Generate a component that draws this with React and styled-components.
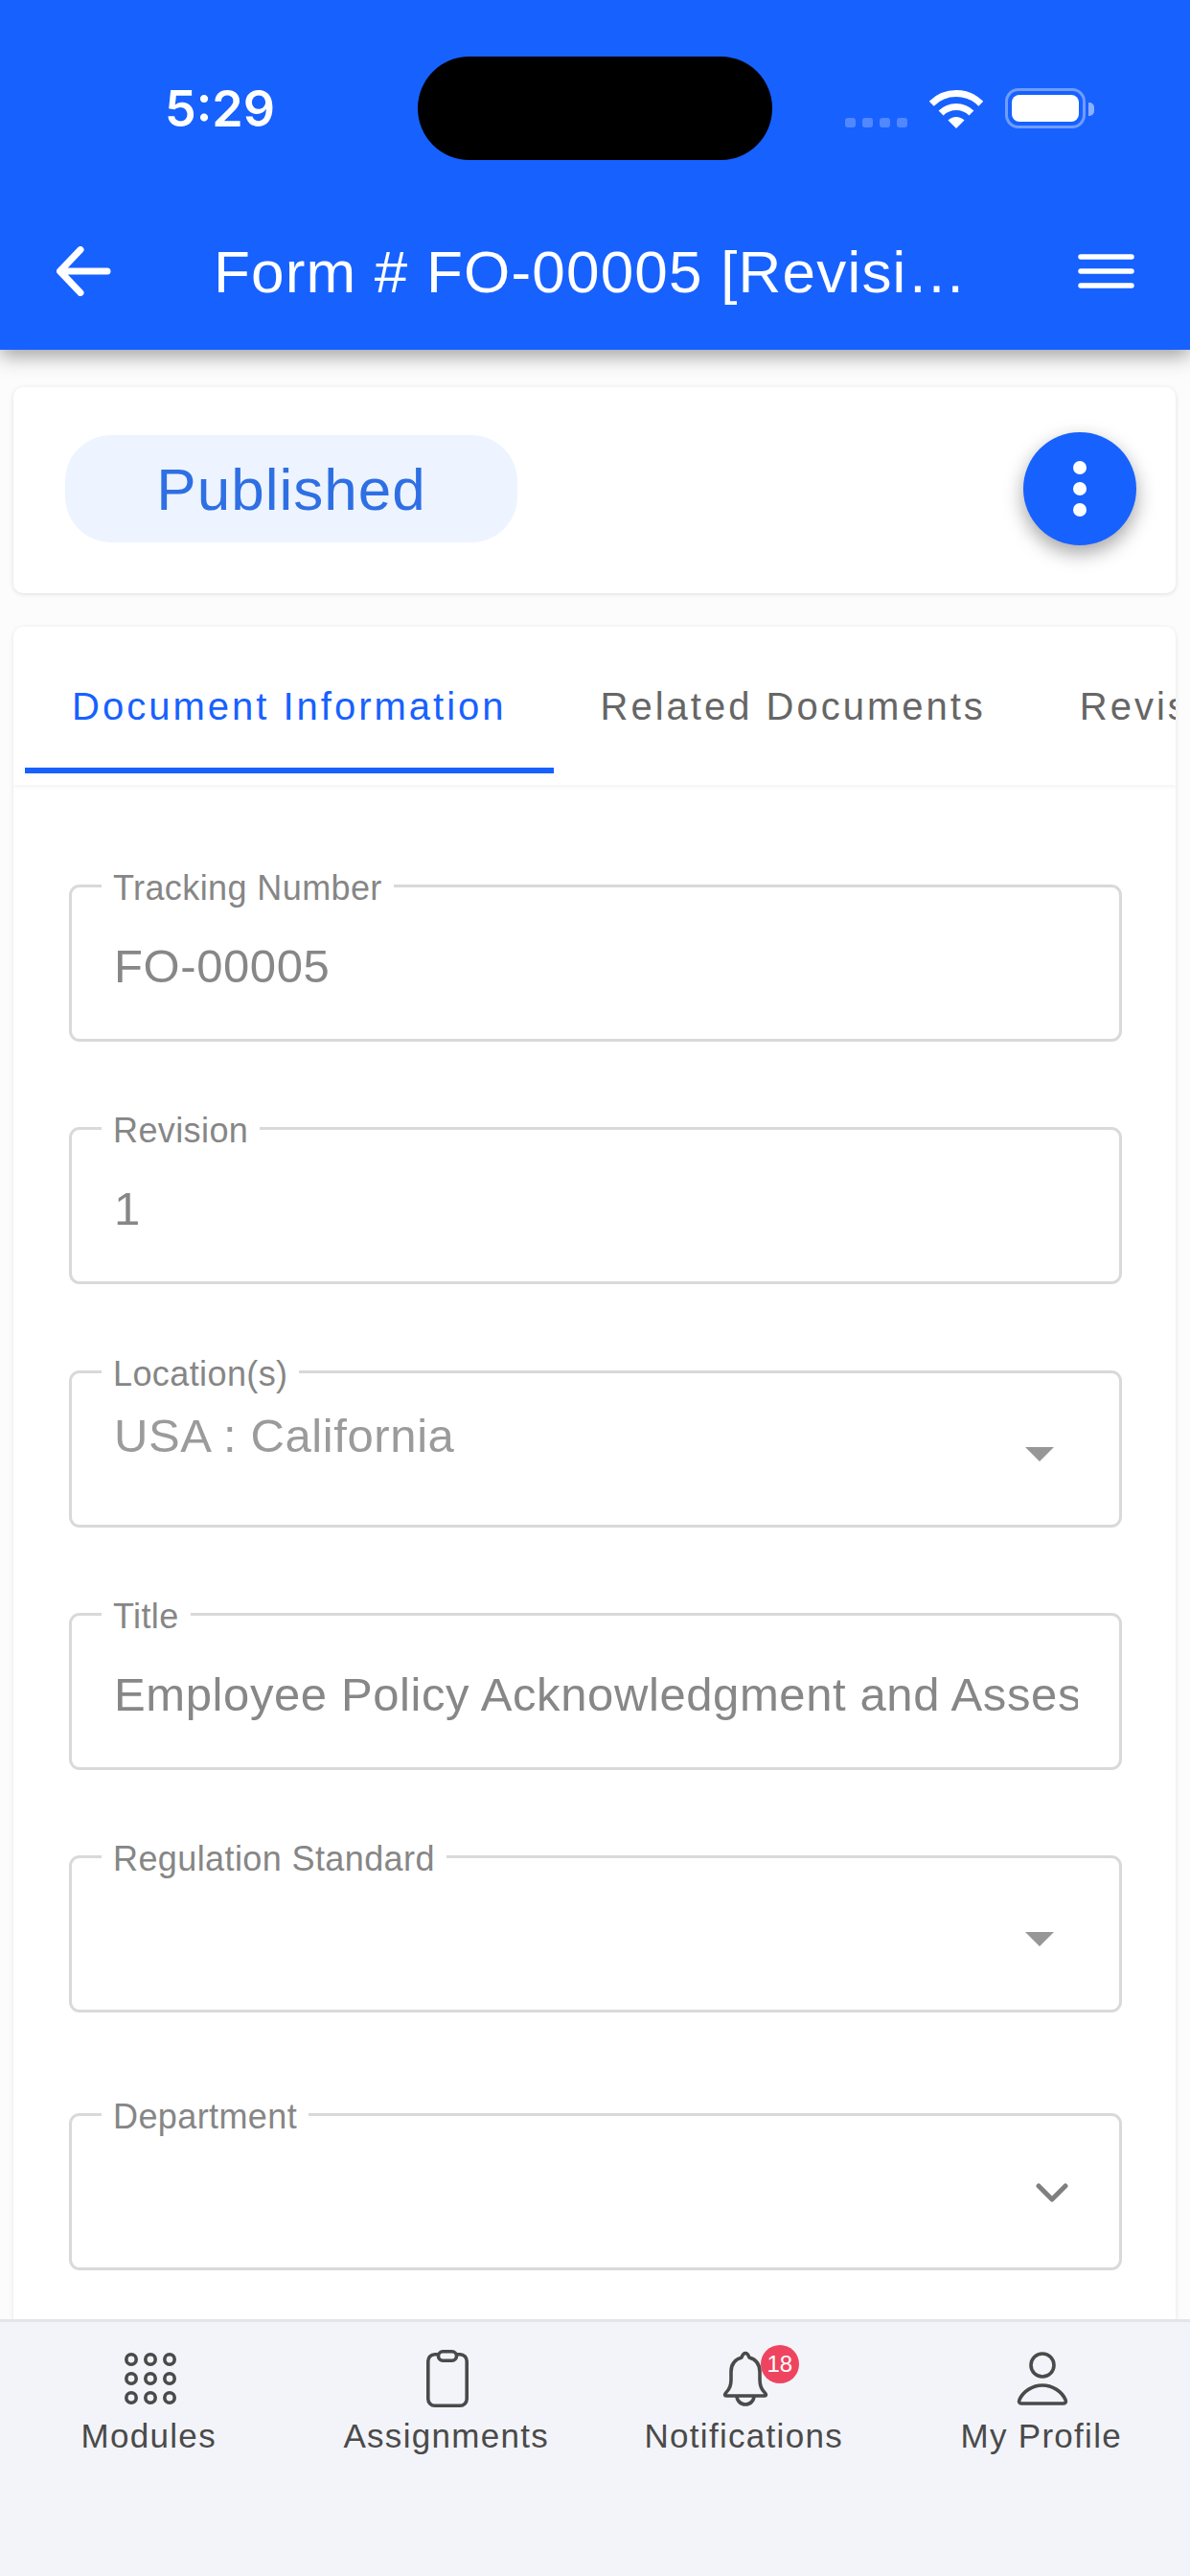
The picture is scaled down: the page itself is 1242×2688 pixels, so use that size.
import React from 'react';
import styled, { createGlobalStyle } from 'styled-components';

const GlobalStyle = createGlobalStyle`
  html, body {
    margin: 0;
    padding: 0;
    background: #fcfcfc;
  }
  * {
    box-sizing: border-box;
  }
`;

const Screen = styled.div`
  width: 1242px;
  height: 2688px;
  display: flex;
  flex-direction: column;
  overflow: hidden;
  background: #fcfcfc;
  font-family: "Liberation Sans", Arial, sans-serif;
`;

const Header = styled.header`
  position: relative;
  z-index: 2;
  height: 365px;
  flex-shrink: 0;
  padding-top: 59px;
  background: #1761ff;
  color: #fff;
  box-shadow: 0 6px 20px rgba(0, 0, 0, 0.38);
`;

const StatusBar = styled.div`
  display: grid;
  grid-template-columns: 436px 370px 1fr;
  align-items: center;
  height: 108px;
`;

const Time = styled.div`
  padding-left: 172px;
  font-family: Inter, sans-serif;
  font-size: 52px;
  font-weight: 600;
`;

const Island = styled.div`
  height: 108px;
  border-radius: 54px;
  background: #000;
`;

const StatusIcons = styled.div`
  display: flex;
  align-items: flex-end;
  padding-left: 76px;
  height: 42px;
`;

const Signal = styled.div`
  display: flex;
  gap: 7px;
  margin-right: 23px;
  padding-bottom: 1px;
`;

const SignalDot = styled.span`
  width: 11px;
  height: 10px;
  border-radius: 3px;
  background: rgba(255, 255, 255, 0.25);
`;

const Battery = styled.div`
  position: relative;
  width: 84px;
  height: 42px;
  margin-left: 23px;
  padding: 4px;
  border: 3px solid rgba(255, 255, 255, 0.38);
  border-radius: 14px;

  &::after {
    content: '';
    position: absolute;
    right: -12px;
    top: 12px;
    width: 6px;
    height: 14px;
    border-radius: 0 5px 5px 0;
    background: rgba(255, 255, 255, 0.5);
  }
`;

const BatteryFill = styled.div`
  height: 100%;
  border-radius: 8px;
  background: #fff;
`;

const Toolbar = styled.div`
  display: flex;
  align-items: center;
  height: 116px;
  margin-top: 58px;
  padding: 0 58px 0 59px;
`;

const Title = styled.h1`
  width: 790px;
  margin: 0 auto 0 107px;
  overflow: hidden;
  white-space: nowrap;
  text-overflow: ellipsis;
  font-size: 62px;
  font-weight: 400;
  letter-spacing: 1.2px;
`;

const Main = styled.main`
  flex: 1;
  min-height: 0;
  overflow: hidden;
  padding: 39px 15px 0 14px;
`;

const StatusCard = styled.section`
  display: flex;
  align-items: center;
  justify-content: space-between;
  height: 215px;
  padding: 0 41px 3px 54px;
  border-radius: 10px;
  background: #fff;
  box-shadow: 0 1px 5px rgba(0, 0, 0, 0.12);
`;

const Chip = styled.div`
  display: flex;
  align-items: center;
  justify-content: center;
  width: 472px;
  height: 112px;
  border-radius: 48px;
  background: #edf4ff;
  color: #2f6fe4;
  font-size: 62px;
  letter-spacing: 1px;
`;

const Fab = styled.button`
  display: flex;
  align-items: center;
  justify-content: center;
  width: 118px;
  height: 118px;
  padding: 0;
  border: 0;
  border-radius: 50%;
  background: #1761ff;
  box-shadow: 0 8px 20px rgba(0, 0, 0, 0.36);
`;

const FormCard = styled.section`
  height: 1766px;
  margin-top: 35px;
  overflow: hidden;
  border-radius: 10px 10px 0 0;
  background: #fff;
  box-shadow: 0 1px 5px rgba(0, 0, 0, 0.1);
`;

const Tabs = styled.nav`
  display: flex;
  height: 165px;
  padding: 0 0 12px 12px;
  overflow: hidden;
  box-shadow: 0 2px 4px rgba(0, 0, 0, 0.05);
`;

const Tab = styled.div`
  flex-shrink: 0;
  display: flex;
  align-items: center;
  padding: 20px 49px 0;
  border-bottom: 6px solid ${p => (p.$active ? '#1761ff' : 'transparent')};
  color: ${p => (p.$active ? '#1761ff' : '#666')};
  font-size: 40px;
  letter-spacing: 3px;
  white-space: nowrap;
`;

const Form = styled.div`
  display: flex;
  flex-direction: column;
  gap: 89.3px;
  padding: 104px 56px 0 58px;
`;

const Field = styled.div`
  position: relative;
  display: flex;
  align-items: ${p => (p.$raised ? 'flex-start' : 'center')};
  flex-shrink: 0;
  height: 164px;
  margin-top: ${p => p.$offset || 0}px;
  padding: ${p => (p.$raised ? '36px' : '6px')} 43px 0 44px;
  border: 3px solid #d9d9dc;
  border-radius: 11px;
`;

const FieldLabel = styled.label`
  position: absolute;
  left: 31px;
  top: -19px;
  padding: 0 12px;
  background: #fff;
  color: #868686;
  font-size: 36px;
  letter-spacing: 0.4px;
  line-height: 40px;
  white-space: nowrap;
`;

const FieldValue = styled.div`
  flex: 1;
  min-width: 0;
  overflow: hidden;
  color: ${p => (p.$disabled ? '#9b9b9b' : '#878787')};
  font-size: 49px;
  letter-spacing: 0.6px;
  line-height: 58px;
  white-space: nowrap;
`;

const Caret = styled.span`
  position: absolute;
  right: 68px;
  top: 77px;
  width: 0;
  height: 0;
  border-left: 15px solid transparent;
  border-right: 15px solid transparent;
  border-top: 15px solid #979797;
`;

const Chevron = styled.svg`
  position: absolute;
  right: 53px;
  top: 70px;
`;

const BottomNav = styled.nav`
  position: relative;
  z-index: 3;
  display: grid;
  grid-template-columns: repeat(4, 1fr);
  flex-shrink: 0;
  height: 268px;
  padding-top: 29px;
  border-top: 3px solid #e3e4e8;
  background: #f3f4f9;
`;

const NavItem = styled.div`
  display: flex;
  flex-direction: column;
  align-items: center;
  color: #4a4a4a;
  font-size: 35px;
  letter-spacing: 1.3px;
  line-height: 40px;
`;

const NavIcon = styled.div`
  position: relative;
  display: flex;
  align-items: center;
  justify-content: center;
  height: 60px;
  margin: 0 0 10px 3px;
`;

const Badge = styled.span`
  position: absolute;
  left: 41px;
  top: -5px;
  width: 40px;
  height: 40px;
  border-radius: 50%;
  background: #ee4460;
  color: #fff;
  font-size: 24px;
  letter-spacing: 0;
  line-height: 40px;
  text-align: center;
`;

const BackIcon = () => (
  <svg width="57" height="52" viewBox="0 0 57 52" fill="none" stroke="#fff" strokeWidth="7" strokeLinecap="round" strokeLinejoin="round">
    <path d="M53 26H4M25 3.5 3.5 26 25 48.5" />
  </svg>
);

const MenuIcon = () => (
  <svg width="59" height="36" viewBox="0 0 59 36" fill="none" stroke="#fff" strokeWidth="5.5" strokeLinecap="round">
    <path d="M3 3H56M3 18H56M3 33H56" />
  </svg>
);

const WifiIcon = () => (
  <svg width="56" height="41" viewBox="0 0 56 41" fill="none" stroke="#fff" strokeWidth="7">
    <path d="M2.2 15.2A36.5 36.5 0 0 1 53.8 15.2" />
    <path d="M12.1 25.1A22.5 22.5 0 0 1 43.9 25.1" />
    <path d="M28 41 19.5 32.5A12 12 0 0 1 36.5 32.5Z" fill="#fff" stroke="none" />
  </svg>
);

const DotsIcon = () => (
  <svg width="16" height="60" viewBox="0 0 16 60" fill="#fff">
    <circle cx="8" cy="8" r="7" />
    <circle cx="8" cy="30" r="7" />
    <circle cx="8" cy="52" r="7" />
  </svg>
);

const ModulesIcon = () => (
  <svg width="54" height="54" viewBox="0 0 54 54" fill="none" stroke="#4a4a4a" strokeWidth="3.6">
    {[7, 27, 47].map(y => [7, 27, 47].map(x => <circle key={`${x}-${y}`} cx={x} cy={y} r="5.2" />))}
  </svg>
);

const ClipboardIcon = () => (
  <svg width="44" height="60" viewBox="0 0 44 60" fill="none" stroke="#4a4a4a" strokeWidth="3.6">
    <rect x="1.8" y="4.8" width="40.4" height="53.4" rx="7" />
    <rect x="12.5" y="1.8" width="19" height="9.4" rx="4.7" fill="#f3f4f9" />
  </svg>
);

const BellIcon = () => (
  <svg width="50" height="58" viewBox="0 0 50 58" fill="none" stroke="#4a4a4a" strokeWidth="3.6" strokeLinejoin="round">
    <path d="M4.5 44C9 40 10 36 10 30V22C10 14 14 9 21 7 22 4 23.5 2.5 25 2.5 26.5 2.5 28 4 29 7 36 9 40 14 40 22V30C40 36 41 40 45.500 44 47 46 46.500 47 45 47H5C3.500 47 3 46 4.500 44Z" />
    <path d="M16 47A9 9 0 0 0 34 47" />
  </svg>
);

const ProfileIcon = () => (
  <svg width="54" height="58" viewBox="0 0 54 58" fill="none" stroke="#4a4a4a" strokeWidth="3.6">
    <circle cx="27" cy="15" r="12" />
    <path d="M5 55H49C51 55 52 53.500 51 51 47 42 37 36 27 36 17 36 7 42 3 51 2 53.500 3 55 5 55Z" strokeLinejoin="round" />
  </svg>
);

const fields = [
  { label: 'Tracking Number', value: 'FO-00005' },
  { label: 'Revision', value: '1' },
  { label: 'Location(s)', value: 'USA : California', disabled: true, raised: true, control: 'caret' },
  { label: 'Title', value: 'Employee Policy Acknowledgment and Assessment' },
  { label: 'Regulation Standard', value: '', control: 'caret' },
  { label: 'Department', value: '', control: 'chevron', offset: 16 },
];

const tabs = ['Document Information', 'Related Documents', 'Revisions'];

const navItems = [
  { label: 'Modules', icon: <ModulesIcon /> },
  { label: 'Assignments', icon: <ClipboardIcon /> },
  { label: 'Notifications', icon: <BellIcon />, badge: 18 },
  { label: 'My Profile', icon: <ProfileIcon /> },
];

export default function App() {
  return (
    <Screen>
      <GlobalStyle />
      <Header>
        <StatusBar>
          <Time>5:29</Time>
          <Island />
          <StatusIcons>
            <Signal>
              <SignalDot />
              <SignalDot />
              <SignalDot />
              <SignalDot />
            </Signal>
            <WifiIcon />
            <Battery>
              <BatteryFill />
            </Battery>
          </StatusIcons>
        </StatusBar>
        <Toolbar>
          <BackIcon />
          <Title>Form # FO-00005 [Revision 1]</Title>
          <MenuIcon />
        </Toolbar>
      </Header>
      <Main>
        <StatusCard>
          <Chip>Published</Chip>
          <Fab>
            <DotsIcon />
          </Fab>
        </StatusCard>
        <FormCard>
          <Tabs>
            {tabs.map((t, i) => (
              <Tab key={t} $active={i === 0}>{t}</Tab>
            ))}
          </Tabs>
          <Form>
            {fields.map(f => (
              <Field key={f.label} $raised={f.raised} $offset={f.offset}>
                <FieldLabel>{f.label}</FieldLabel>
                <FieldValue $disabled={f.disabled}>{f.value}</FieldValue>
                {f.control === 'caret' && <Caret />}
                {f.control === 'chevron' && (
                  <Chevron width="34" height="20" viewBox="0 0 34 20" fill="none" stroke="#808080" strokeWidth="5" strokeLinecap="round" strokeLinejoin="round">
                    <path d="M3 3 17 17 31 3" />
                  </Chevron>
                )}
              </Field>
            ))}
          </Form>
        </FormCard>
      </Main>
      <BottomNav>
        {navItems.map(n => (
          <NavItem key={n.label}>
            <NavIcon>
              {n.icon}
              {n.badge && <Badge>{n.badge}</Badge>}
            </NavIcon>
            {n.label}
          </NavItem>
        ))}
      </BottomNav>
    </Screen>
  );
}
